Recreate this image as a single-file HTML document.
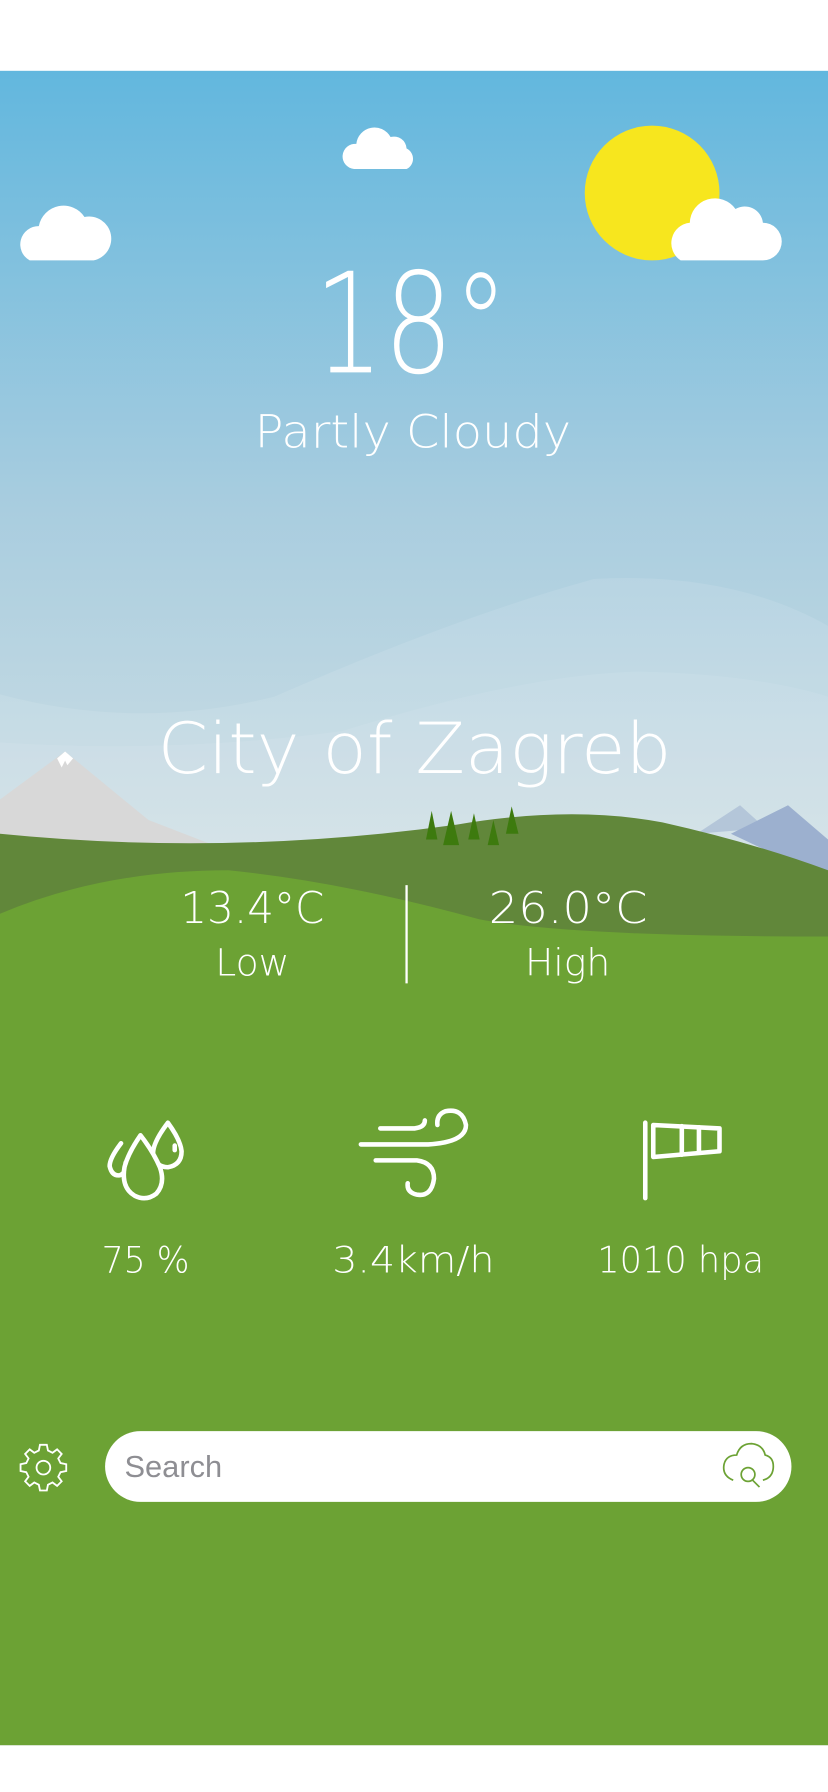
<!DOCTYPE html>
<html><head><meta charset="utf-8"><style>
html,body{margin:0;padding:0;background:#fff;}
svg{display:block;}
text{font-family:"DejaVu Sans","Liberation Sans",sans-serif;font-weight:200;fill:#fff;}
</style></head><body>
<svg width="828" height="1792" viewBox="0 0 725 1569" preserveAspectRatio="none" xmlns="http://www.w3.org/2000/svg">
<defs>
<linearGradient id="sky" x1="0" y1="62" x2="0" y2="760" gradientUnits="userSpaceOnUse">
<stop offset="0" stop-color="#62b7de"/><stop offset="0.55" stop-color="#a9cddf"/><stop offset="1" stop-color="#cfdfe4"/>
</linearGradient>
</defs>
<rect x="0" y="0" width="725" height="1569" fill="#fff"/>
<rect x="0" y="62" width="725" height="1466" fill="url(#sky)"/>
<path d="M0,608 Q120,640 240,610 Q400,540 520,507 Q640,500 725,548 L725,800 L0,800Z" fill="#fff" opacity="0.1"/>
<path d="M0,650 Q150,660 300,640 Q460,590 560,588 Q660,590 725,610 L725,800 L0,800Z" fill="#fff" opacity="0.08"/>
<circle cx="571" cy="169" r="59" fill="#f7e61e"/>
<g fill="#fff">
<path d="M596,228 a18,18 0 0 1 8,-33 a22,22 0 0 1 40,-12 a16,16 0 0 1 24,12 a16,16 0 0 1 0,33Z"/>
<path d="M26,228 a16,16 0 0 1 8,-30 a22,22 0 0 1 40,-8 a15,15 0 0 1 8,38Z"/>
<path d="M310,148 a11,11 0 0 1 2,-22 a16,16 0 0 1 30,-6 a11,11 0 0 1 14,10 a10,10 0 0 1 0,18Z"/>
</g>
<text x="275" y="326" font-size="122" textLength="170" lengthAdjust="spacingAndGlyphs">18°</text>
<text x="223" y="392" font-size="40" textLength="277" lengthAdjust="spacingAndGlyphs">Partly Cloudy</text>
<path d="M0,700 L57,658 L130,718 L200,745 L0,745Z" fill="#d8d8d8"/>
<path d="M50,664 L57,658 L64,664 L59,670 L57,666 L54,672Z" fill="#fff"/>
<path d="M610,730 L648,705 L670,725Z" fill="#b4c6d9"/>
<path d="M640,730 L690,705 L725,735 L725,770Z" fill="#9cb0cf"/>
<path d="M0,730 Q200,750 400,722 Q500,705 580,720 Q660,738 725,762 L725,1528 L0,1528Z" fill="#61873a"/>
<g fill="#3d7a0e">
<path d="M373,735 L378,710 L383,735Z"/><path d="M388,740 L395,710 L402,740Z"/><path d="M410,735 L415,712 L420,735Z"/><path d="M427,740 L432,718 L437,740Z"/><path d="M443,730 L448,706 L454,730Z"/>
</g>
<path d="M0,800 Q90,762 200,762 Q300,772 420,805 Q500,820 725,820 L725,1528 L0,1528Z" fill="#6ca234"/>
<text x="138" y="677" font-size="62" textLength="450" lengthAdjust="spacingAndGlyphs">City of Zagreb</text>
<text x="158" y="808" font-size="38" textLength="126" lengthAdjust="spacingAndGlyphs">13.4°C</text>
<text x="221" y="854" font-size="33" text-anchor="middle">Low</text>
<rect x="355" y="775" width="2" height="86" fill="#fff"/>
<text x="428" y="808" font-size="38" textLength="139" lengthAdjust="spacingAndGlyphs">26.0°C</text>
<text x="497" y="854" font-size="33" text-anchor="middle">High</text>
<g fill="none" stroke="#fff" stroke-width="4" stroke-linecap="round" stroke-linejoin="round">
<path d="M147,983 Q134,1000 134,1010 Q136,1022 147,1022 Q159,1020 159,1008 Q158,998 147,983Z"/>
<path d="M106,1001 Q96,1014 96,1021 Q98,1030 105,1029 Q111,1027 110,1018"/>
<path d="M123,994 Q112,1010 109,1022 Q106,1040 118,1047 Q128,1052 137,1045 Q145,1036 140,1022 Q134,1008 123,994Z" fill="#6ca234"/>
<path d="M153,1003 L153,1007"/>
<path d="M316,1002 L375,1002 Q408,1000 408,985 Q405,970 390,973 Q382,976 383,985"/>
<path d="M333,988 L363,988 Q372,987 372,981"/>
<path d="M329,1016 L365,1016 Q380,1018 380,1032 Q378,1048 365,1046 Q356,1044 357,1036"/>
<path d="M565,983 L565,1049"/>
<path d="M572,985 L630,988 L630,1008 L572,1013Z"/>
<path d="M597,986 L597,1011 M612,987 L612,1009"/>
</g>
<text x="89" y="1114" font-size="32" textLength="77" lengthAdjust="spacingAndGlyphs">75 %</text>
<text x="291" y="1114" font-size="32" textLength="142" lengthAdjust="spacingAndGlyphs">3.4km/h</text>
<text x="523" y="1114" font-size="32" textLength="146" lengthAdjust="spacingAndGlyphs">1010 hpa</text>
<g fill="none" stroke="#fff" stroke-width="1.6">
<path d="M35,1265 L41,1265 L42,1270 L46,1272 L50,1269 L54,1273 L51,1277 L53,1281 L58,1282 L58,1288 L53,1289 L51,1293 L54,1297 L50,1301 L46,1298 L42,1300 L41,1305 L35,1305 L34,1300 L30,1298 L26,1301 L22,1297 L25,1293 L23,1289 L18,1288 L18,1282 L23,1281 L25,1277 L22,1273 L26,1269 L30,1272 L34,1270Z"/>
<circle cx="38" cy="1285" r="6"/>
</g>
<rect x="92" y="1253" width="601" height="62" rx="31" fill="#fff"/>
<text x="109" y="1293" font-size="27" style="font-family:'Liberation Sans',sans-serif;font-weight:400;fill:#8e8e93">Search</text>
<g fill="none" stroke="#6ca234" stroke-width="1.5">
<path d="M642,1296 Q632,1292 634,1282 Q636,1274 645,1274 Q648,1264 658,1264 Q668,1265 670,1274 Q678,1276 677,1286 Q676,1294 668,1296"/>
<circle cx="655" cy="1291" r="6"/><path d="M659,1296 L665,1302"/>
</g>
</svg>
</body></html>
